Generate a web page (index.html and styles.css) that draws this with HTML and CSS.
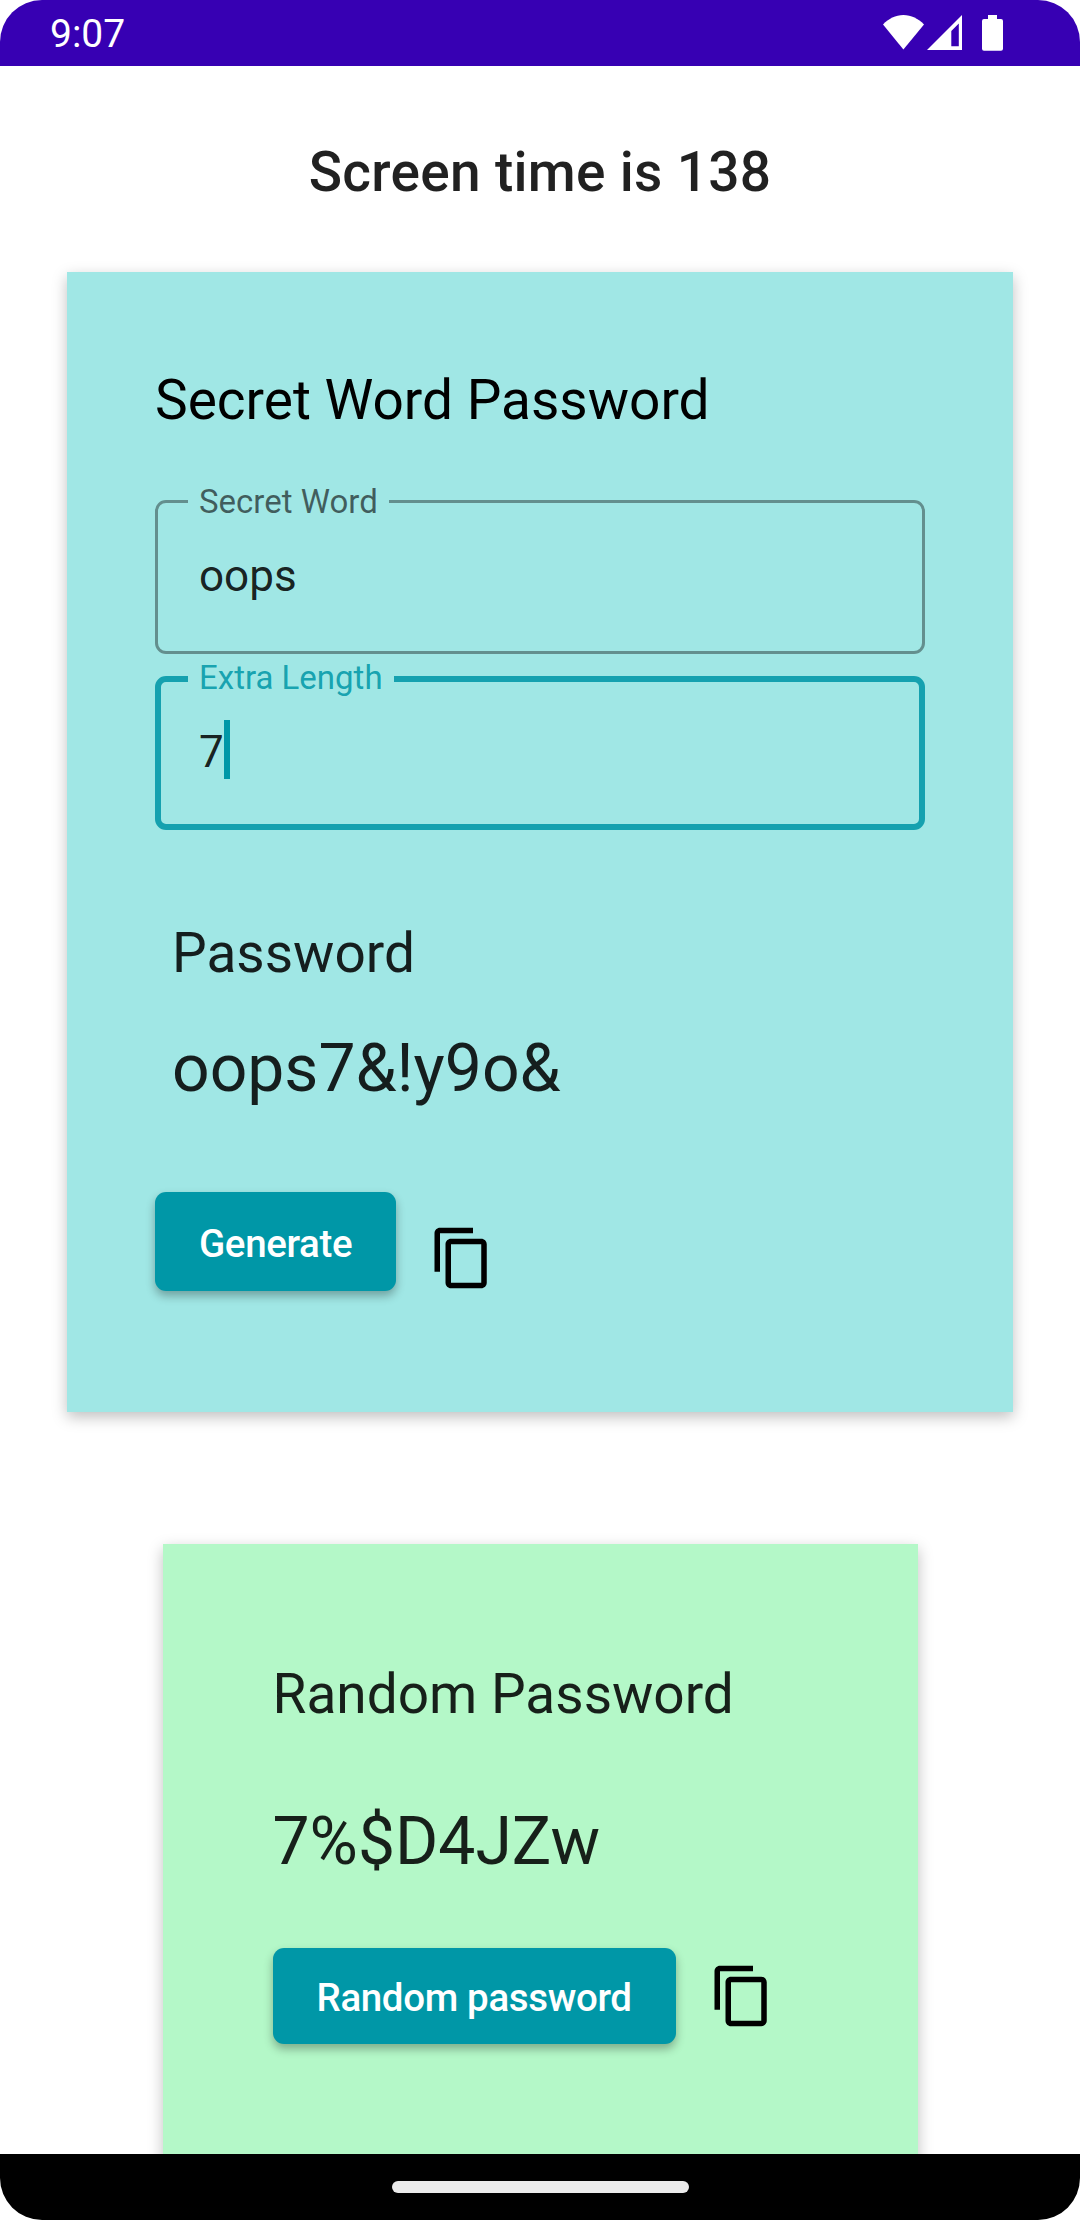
FILE: index.html
```html
<!DOCTYPE html>
<html lang="en">
<head>
<meta charset="utf-8">
<title>Password generator</title>
<link rel="stylesheet" href="styles.css">
</head>
<body>
<div class="screen">
  <header class="status-bar">
    <span class="clock">9:07</span>
    <svg class="status-icons" width="122" height="38" viewBox="882 14 122 38" fill="#fff">
      <path d="M903.4 49.6 883 24.4C888.6 18.6 895.6 15 903.4 15s14.9 3.6 20.6 9.4z"/>
      <path fill-rule="evenodd" d="M962 15v35h-35zM958.8 23.6 951.3 31v15.2h7.5z"/>
      <path d="M988 15h9v4h4a2 2 0 0 1 2 2v27.700a2 2 0 0 1-2 2h-17a2 2 0 0 1-2-2V21a2 2 0 0 1 2-2h4z"/>
    </svg>
  </header>

  <main class="content">
    <h1 class="title">Screen time is 138</h1>

    <section class="card card-secret">
      <h2 class="heading heading-strong">Secret Word Password</h2>
      <fieldset class="field">
        <legend>Secret Word</legend>
        <div class="value">oops</div>
      </fieldset>
      <fieldset class="field field-focused">
        <legend>Extra Length</legend>
        <div class="value">7<span class="caret"></span></div>
      </fieldset>
      <div class="result">
        <h3 class="heading">Password</h3>
        <p class="password">oops7&amp;!y9o&amp;</p>
      </div>
      <div class="actions">
        <button class="button" type="button">Generate</button>
        <svg class="copy" viewBox="0 0 24 24"><path d="M16 1H4c-1.100 0-2 .9-2 2v14h2V3h12V1zm3 4H8c-1.100 0-2 .9-2 2v14c0 1.100.9 2 2 2h11c1.100 0 2-.9 2-2V7c0-1.100-.9-2-2-2zm0 16H8V7h11v14z"/></svg>
      </div>
    </section>

    <section class="card card-random">
      <h2 class="heading">Random Password</h2>
      <p class="password">7%$D4JZw</p>
      <div class="actions">
        <button class="button" type="button">Random password</button>
        <svg class="copy" viewBox="0 0 24 24"><path d="M16 1H4c-1.100 0-2 .9-2 2v14h2V3h12V1zm3 4H8c-1.100 0-2 .9-2 2v14c0 1.100.9 2 2 2h11c1.100 0 2-.9 2-2V7c0-1.100-.9-2-2-2zm0 16H8V7h11v14z"/></svg>
      </div>
    </section>
  </main>

  <footer class="nav-bar"><span class="handle"></span></footer>
</div>
</body>
</html>
```
FILE: styles.css
```css
* {
  box-sizing: border-box;
}

body {
  margin: 0;
  background: #fff;
  font-family: Roboto, "Noto Sans", sans-serif;
  color: rgba(0, 0, 0, 0.87);
}

h1, h2, h3, p {
  margin: 0;
  font-weight: 400;
}

.screen {
  display: flex;
  flex-direction: column;
  width: 1080px;
  height: 2220px;
  overflow: hidden;
  border-radius: 42px;
}

.status-bar {
  display: flex;
  align-items: flex-start;
  justify-content: space-between;
  flex: 0 0 66px;
  padding: 0 76px 0 50px;
  background: #3700b3;
}

.clock {
  padding-top: 3px;
  color: #fff;
  font-size: 39px;
  line-height: 63px;
}

.status-icons {
  margin-top: 14px;
}

.content {
  display: flex;
  flex: 1 1 0;
  flex-direction: column;
  align-items: center;
  min-height: 0;
  padding-top: 73px;
  overflow: hidden;
}

.title {
  font-size: 55px;
  font-weight: 500;
  line-height: 66px;
  letter-spacing: 0.3px;
}

.card {
  flex: none;
  box-shadow: 0 5px 14px rgba(0, 0, 0, 0.25);
}

.card-secret {
  width: 946px;
  height: 1140px;
  margin-top: 67px;
  padding: 95px 88px 0;
  background: #a0e7e5;
}

.card-random {
  width: 755px;
  height: 720px;
  margin-top: 132px;
  padding: 117px 110px 0;
  background: #b4f8c8;
}

.heading {
  font-size: 55px;
  line-height: 66px;
}

.heading-strong {
  color: #000;
}

.field {
  height: 154px;
  min-width: 0;
  margin: 67px 0 0;
  padding: 42px 41px 0;
  border: 3px solid rgba(0, 0, 0, 0.38);
  border-radius: 11px;
}

.field legend {
  margin-left: -11px;
  padding: 0 11px;
  color: rgba(0, 0, 0, 0.6);
  font-size: 33px;
  line-height: 3px;
}

.field-focused {
  margin-top: 22px;
  padding: 38px 38px 0;
  border: 6px solid rgba(0, 151, 167, 0.87);
}

.field-focused legend {
  padding-bottom: 2px;
  color: rgba(0, 151, 167, 0.87);
  line-height: 4px;
}

.value {
  display: flex;
  align-items: center;
  font-size: 44px;
  line-height: 62px;
}

.caret {
  width: 6px;
  height: 59px;
  margin-bottom: 5px;
  background: #0097a7;
}

.result {
  margin-top: 90px;
  padding-left: 17px;
}

.password {
  font-size: 66px;
  line-height: 79px;
}

.result .password {
  margin-top: 43px;
}

.card-random .password {
  margin-top: 75px;
}

.actions {
  display: flex;
  align-items: flex-start;
  gap: 33px;
  margin-top: 84px;
}

.card-random .actions {
  margin-top: 67px;
}

.button {
  height: 99px;
  padding: 4px 44px 0;
  border: 0;
  border-radius: 11px;
  background: #0097a7;
  box-shadow: 0 5px 10px rgba(0, 0, 0, 0.3);
  color: #fff;
  font: 500 38.5px/60px Roboto, "Noto Sans", sans-serif;
  letter-spacing: -0.35px;
}

.card-random .button {
  height: 96px;
  padding-top: 3px;
}

.copy {
  width: 66px;
  height: 66px;
  margin-top: 32.500px;
}

.card-random .copy {
  margin-top: 14.600px;
}

.nav-bar {
  display: flex;
  flex: 0 0 66px;
  justify-content: center;
  padding-top: 27px;
  background: #000;
}

.handle {
  width: 297px;
  height: 12px;
  border-radius: 6px;
  background: #ebebeb;
}
```
